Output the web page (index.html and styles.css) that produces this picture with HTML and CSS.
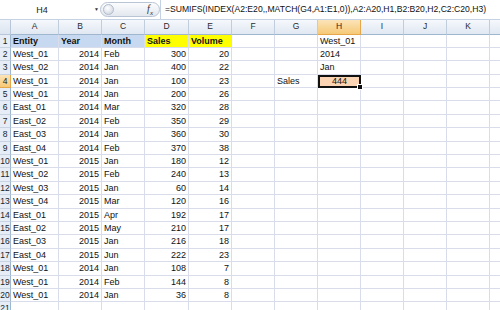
FILE: index.html
```html
<!DOCTYPE html>
<html lang="en">
<head>
    <meta charset="UTF-8">
    <title>SUMIFS with INDEX MATCH</title>
    <link rel="stylesheet" href="styles.css">
</head>
<body>
    <div class="formula-bar">
        <div class="name-box">
            <span class="cell-ref">H4</span>
            <span class="drop">&#9660;</span>
        </div>
        <div class="fx-pill">
            <span class="knob"></span>
            <span class="fx">f<sub>x</sub></span>
        </div>
        <div class="formula">=SUMIFS(INDEX(A2:E20,,MATCH(G4,A1:E1,0)),A2:A20,H1,B2:B20,H2,C2:C20,H3)</div>
    </div>
    <div class="sheet" id="sheet">
        <!-- cells are built by the script below -->
    </div>
    <script>
    const cols = ['A', 'B', 'C', 'D', 'E', 'F', 'G', 'H', 'I', 'J', 'K', ''];

    const rows = [
        ['West_01', 2014, 'Feb', 300, 20],
        ['West_02', 2014, 'Jan', 400, 22],
        ['West_01', 2014, 'Jan', 100, 23],
        ['West_01', 2014, 'Jan', 200, 26],
        ['East_01', 2014, 'Mar', 320, 28],
        ['East_02', 2014, 'Feb', 350, 29],
        ['East_03', 2014, 'Jan', 360, 30],
        ['East_04', 2014, 'Feb', 370, 38],
        ['West_01', 2015, 'Jan', 180, 12],
        ['West_02', 2015, 'Feb', 240, 13],
        ['West_03', 2015, 'Jan', 60, 14],
        ['West_04', 2015, 'Mar', 120, 16],
        ['East_01', 2015, 'Apr', 192, 17],
        ['East_02', 2015, 'May', 210, 17],
        ['East_03', 2015, 'Jan', 216, 18],
        ['East_04', 2015, 'Jun', 222, 23],
        ['West_01', 2014, 'Jan', 108, 7],
        ['West_01', 2014, 'Feb', 144, 8],
        ['West_01', 2014, 'Jan', 36, 8]
    ];

    // lookup inputs on the right
    const side = {
        1: { H: 'West_01' },
        2: { H: '2014' },
        3: { H: 'Jan' },
        4: { G: 'Sales', H: '444' }
    };

    function cell(text, cls) {
        const div = document.createElement('div');
        div.className = 'cell ' + (cls || '');
        div.textContent = text === undefined ? '' : text;
        return div;
    }

    function renderSheet() {
        const sheet = document.getElementById('sheet');

        sheet.appendChild(cell('', 'corner'));
        cols.forEach(c => {
            sheet.appendChild(cell(c, 'col-head' + (c === 'H' ? ' active' : '')));
        });

        for (let r = 1; r <= 21; r++) {
            sheet.appendChild(cell(r, 'row-head' + (r === 4 ? ' active' : '')));
            cols.forEach((c, i) => {
                let text = '';
                let cls = '';
                if (r === 1 && i < 5) {
                    text = ['Entity', 'Year', 'Month', 'Sales', 'Volume'][i];
                    cls = i < 3 ? 'title blue' : 'title yellow';
                } else if (r > 1 && r <= 20 && i < 5) {
                    text = rows[r - 2][i];
                    if (typeof text === 'number') cls = 'num';
                }
                if (side[r] && side[r][c]) {
                    text = side[r][c];
                }
                if (r === 4 && c === 'H') {
                    cls = 'result';
                }
                const div = cell(text, cls);
                if (cls === 'result') {
                    const handle = document.createElement('span');
                    handle.className = 'fill-handle';
                    div.appendChild(handle);
                }
                sheet.appendChild(div);
            });
        }
    }

    renderSheet();
    </script>
</body>
</html>
```

FILE: styles.css
```css
body {
    margin: 0;
    font-family: 'Liberation Sans', Arial, sans-serif;
    background: #fff;
    color: #111;
    overflow: hidden;
}
.formula-bar {
    display: flex;
    height: 20px;
    box-sizing: border-box;
    border-bottom: 1px solid #c5d2e3;
    background: #fff;
}
.name-box {
    width: 100px;
    display: flex;
    align-items: center;
    justify-content: center;
    position: relative;
    font-size: 9px;
    color: #222;
}
.cell-ref {
    margin-left: -16px;
}
.drop {
    position: absolute;
    right: 1px;
    top: 6px;
    font-size: 5px;
    color: #333;
}
.fx-pill {
    width: 60px;
    margin: 2px 0;
    border: 1px solid #b9c4d4;
    border-radius: 8px;
    background: linear-gradient(#fbfcfd, #e3e8ef);
    display: flex;
    align-items: center;
    justify-content: space-between;
    padding: 0 6px 0 2px;
    box-sizing: border-box;
}
.knob {
    width: 9px;
    height: 9px;
    border-radius: 50%;
    background: radial-gradient(circle at 40% 35%, #fff, #c8d0dc);
    border: 1px solid #b0bbcb;
}
.fx {
    font-family: 'Liberation Serif', serif;
    font-style: italic;
    font-size: 10px;
    color: #333;
}
.fx sub {
    font-size: 7px;
}
.formula {
    flex: 1;
    border-left: 1px solid #c5d2e3;
    padding-left: 4px;
    font-size: 8.6px;
    line-height: 19px;
    white-space: nowrap;
    overflow: hidden;
    color: #111;
}
.sheet {
    display: grid;
    grid-template-columns: 11px 48px 43px 43px 44px 43px 43px 43px 43px 43px 43px 43px 20px;
    grid-template-rows: 14.5px repeat(21, 13.4px);
}
.cell {
    box-sizing: border-box;
    border-right: 1px solid #d9dcea;
    border-bottom: 1px solid #d9dcea;
    font-size: 9px;
    line-height: 12.4px;
    padding: 0 2px;
    white-space: nowrap;
    overflow: hidden;
    color: #111;
}
.corner {
    background: linear-gradient(#eef3f9, #dbe4f0);
    border-color: #b7c6d9;
}
.col-head {
    background: linear-gradient(#f5f8fc, #e1e8f2);
    border-right: 1px solid #c0cddd;
    border-bottom: 1px solid #9eb6ce;
    text-align: center;
    color: #2a2a2a;
    font-size: 8.5px;
    line-height: 13.5px;
}
.row-head {
    background: #e6edf6;
    border-right: 1px solid #9eb6ce;
    border-bottom: 1px solid #c8d4e2;
    text-align: center;
    color: #222;
    font-size: 8.5px;
    padding: 0;
}
.col-head.active,
.row-head.active {
    background: linear-gradient(#fbe4b8, #f6c977);
    border-color: #e6a74a;
}
.title {
    font-weight: 700;
}
.blue {
    background: #c6d9f0;
}
.yellow {
    background: #ffff00;
}
.num {
    text-align: right;
}
.result {
    position: relative;
    background: #fbd5b3;
    border: 2px solid #111;
    text-align: center;
    line-height: 9.4px;
    overflow: visible;
}
.fill-handle {
    position: absolute;
    right: -4px;
    bottom: -4px;
    width: 4px;
    height: 4px;
    background: #111;
    border: 1px solid #fff;
}
```
